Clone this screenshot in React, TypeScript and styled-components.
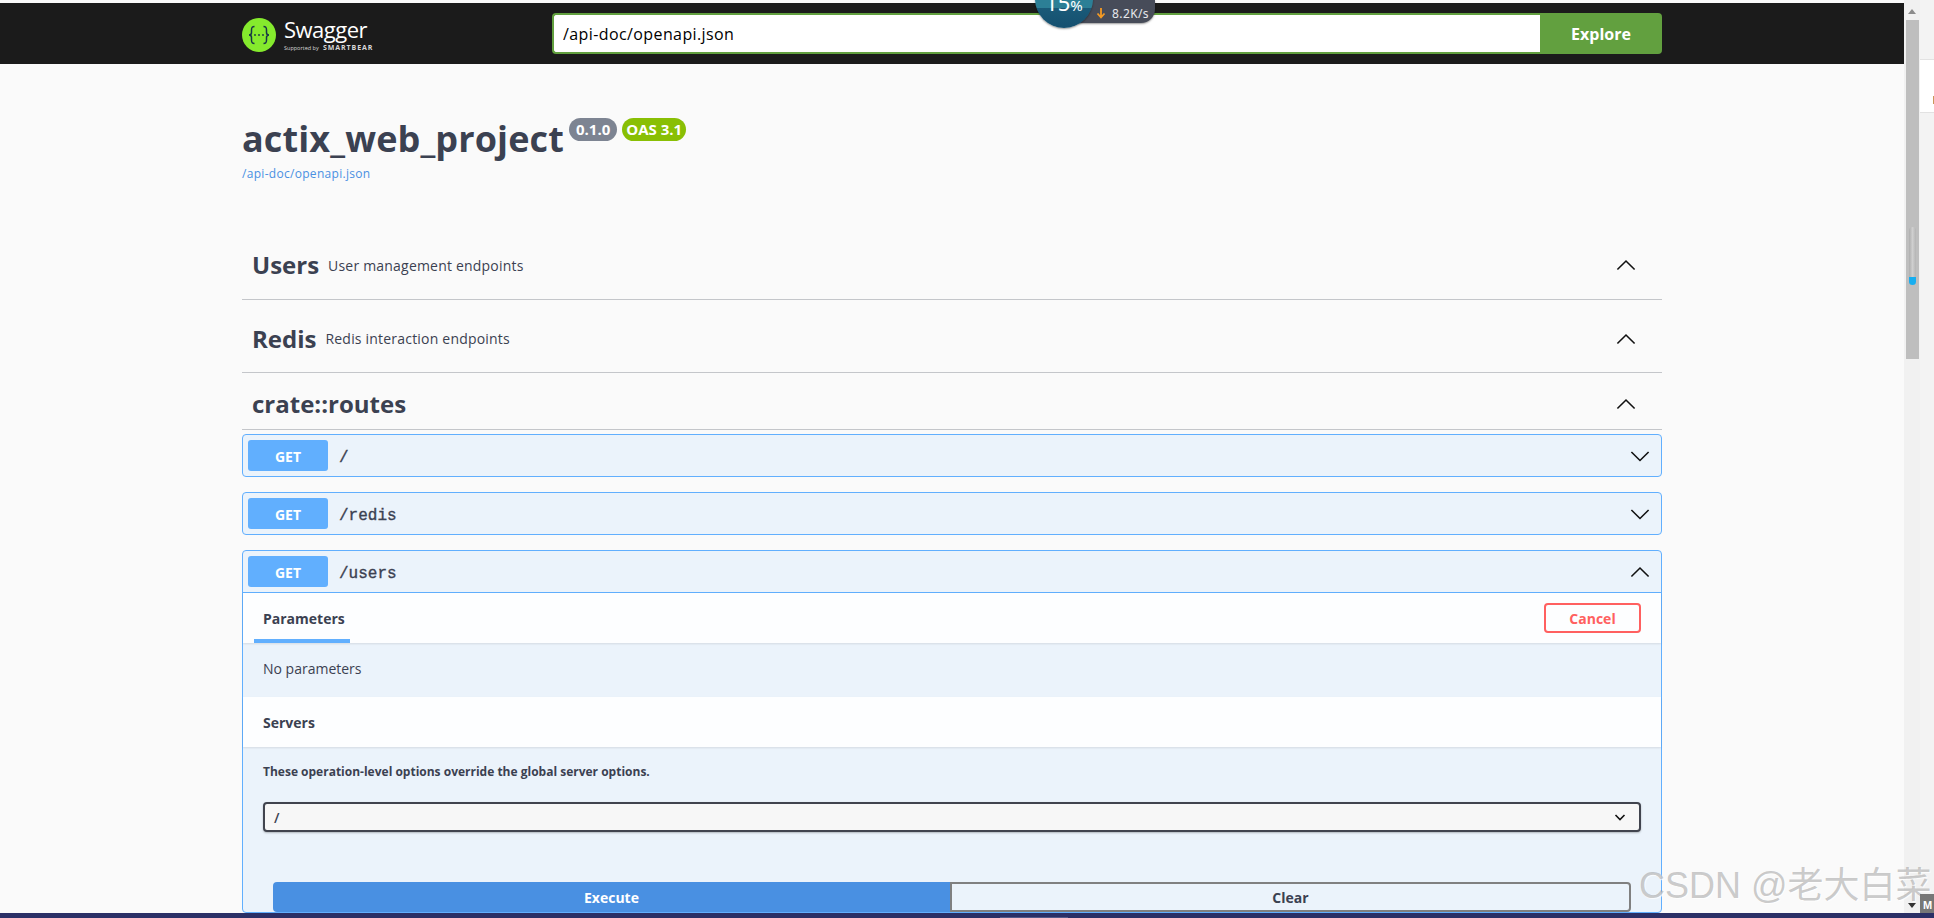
import React from 'react';
import styled, { createGlobalStyle } from 'styled-components';

const GlobalStyle = createGlobalStyle`
  html, body {
    margin: 0;
    padding: 0;
    background: #fafafa;
    overflow: hidden;
  }
  * {
    box-sizing: border-box;
  }
`;

const sans = `"Open Sans", "Noto Sans", sans-serif`;
const mono = `"Liberation Mono", monospace`;

const Screen = styled.div`
  position: relative;
  display: flex;
  width: 1934px;
  height: 918px;
  overflow: hidden;
  font-family: ${sans};
  color: #3b4151;
`;

const Page = styled.main`
  flex: 0 0 1904px;
  padding-top: 3px;
  background: #fafafa;
`;

const TopBar = styled.header`
  display: flex;
  align-items: center;
  justify-content: space-between;
  height: 61px;
  padding: 0 242px;
  background: #1b1b1b;
`;

const Brand = styled.div`
  display: flex;
  align-items: center;
  gap: 8px;
  margin-top: 2px;
`;

const BrandText = styled.div`
  display: flex;
  flex-direction: column;
  color: #fff;
`;

const BrandName = styled.span`
  font-size: 22px;
  line-height: 24px;
  font-weight: 400;
  letter-spacing: -0.5px;
`;

const BrandSub = styled.span`
  margin-top: 3px;
  font-size: 5.5px;
  line-height: 8px;
  color: #d8d8d8;
  white-space: nowrap;

  b {
    margin-left: 3px;
    font-size: 7px;
    letter-spacing: 0.9px;
    font-weight: 700;
  }
`;

const ExploreForm = styled.form`
  display: flex;
  width: 1110px;
  height: 41px;
  margin: 0;
`;

const UrlInput = styled.input`
  flex: 1;
  min-width: 0;
  padding: 0 9px;
  border: 2px solid #62a03f;
  border-right: 0;
  border-radius: 4px 0 0 4px;
  outline: none;
  background: #fff;
  color: #000;
  font-family: ${sans};
  font-size: 16px;
  letter-spacing: 0.4px;
`;

const ExploreButton = styled.button`
  width: 122px;
  border: 0;
  border-radius: 0 4px 4px 0;
  background: #62a03f;
  color: #fff;
  font-family: ${sans};
  font-size: 16px;
  font-weight: 700;
`;

const Content = styled.div`
  padding: 0 242px;
`;

const Info = styled.section`
  height: 163px;
  padding-top: 51px;
`;

const TitleRow = styled.div`
  display: flex;
  align-items: flex-start;
  gap: 5px;
`;

const Title = styled.h1`
  margin: 0;
  font-size: 36px;
  line-height: 48px;
  font-weight: 700;
  letter-spacing: 0.12px;
`;

const Badge = styled.span`
  margin-top: 3px;
  padding: 0 7px;
  height: 23px;
  border-radius: 12px;
  color: #fff;
  font-size: 15px;
  line-height: 23px;
  font-weight: 700;
`;

const VersionBadge = styled(Badge)`
  background: #7d8492;
`;

const OasBadge = styled(Badge)`
  padding: 0 4px;
  background: #89bf04;
`;

const SpecLink = styled.a`
  display: block;
  margin-top: 3px;
  color: #4990e2;
  font-size: 12px;
  line-height: 16px;
  letter-spacing: 0.3px;
`;

const TagRow = styled.div<{ $height: number }>`
  display: flex;
  align-items: center;
  height: ${(p) => p.$height}px;
  padding: 4px 26px 0 10px;
  border-bottom: 1px solid #c4c6ca;
  margin-bottom: 1px;
`;

const TagName = styled.h3`
  margin: 0;
  font-size: 24px;
  line-height: 32px;
  font-weight: 700;
`;

const TagNote = styled.span`
  flex: 1;
  margin-left: 9px;
  font-size: 14px;
  letter-spacing: 0.2px;
`;

const Spacer = styled.span`
  flex: 1;
`;

const Chevron = styled.svg`
  flex: none;
  width: 20px;
  height: 20px;
  fill: none;
  stroke: #111;
  stroke-width: 1.6;
`;

const OpList = styled.div`
  display: flex;
  flex-direction: column;
  gap: 15px;
  margin-top: 4px;
`;

const Op = styled.section`
  border: 1px solid #61affe;
  border-radius: 4px;
  background: #ebf3fb;
`;

const OpSummary = styled.div<{ $open?: boolean }>`
  display: flex;
  align-items: center;
  height: ${(p) => (p.$open ? 42 : 41)}px;
  padding: 0 11px 0 5px;
  border-bottom: ${(p) => (p.$open ? '1px solid #61affe' : '0')};
`;

const Method = styled.span`
  width: 80px;
  height: 31px;
  border-radius: 3px;
  background: #61affe;
  color: #fff;
  font-size: 14px;
  line-height: 33px;
  font-weight: 700;
  text-align: center;
`;

const OpPath = styled.span`
  flex: 1;
  margin-left: 11px;
  padding-top: 5px;
  font-family: ${mono};
  font-size: 16px;
  font-weight: 400;
  -webkit-text-stroke: 0.35px #3b4151;
`;

const SectionHead = styled.div<{ $height: number }>`
  display: flex;
  align-items: center;
  justify-content: space-between;
  height: ${(p) => p.$height}px;
  padding: 0 20px;
  background: #fdfeff;
  box-shadow: 0 1px 2px rgba(0, 0, 0, 0.1);
`;

const Tab = styled.h4`
  position: relative;
  margin: 2px 0 0;
  font-size: 14px;
  line-height: 20px;
  font-weight: 700;

  &::after {
    content: '';
    position: absolute;
    left: -9px;
    bottom: -14px;
    width: 96px;
    height: 4px;
    background: #61affe;
  }
`;

const SectionLabel = styled.h4`
  margin: 2px 0 0;
  font-size: 14px;
  line-height: 20px;
  font-weight: 700;
`;

const CancelButton = styled.button`
  width: 97px;
  height: 30px;
  border: 2px solid #ff6060;
  border-radius: 4px;
  background: transparent;
  color: #ff6060;
  font-family: ${sans};
  font-size: 14px;
  font-weight: 700;
`;

const NoParams = styled.p`
  display: flex;
  align-items: center;
  height: 54px;
  margin: 0;
  padding: 0 20px 4px;
  font-size: 14px;
`;

const ServersBody = styled.div`
  padding: 17px 20px 0;
`;

const ServerNote = styled.p`
  margin: 0;
  font-size: 12px;
  line-height: 16px;
  font-weight: 700;
`;

const ServerSelect = styled.div`
  display: flex;
  align-items: center;
  justify-content: space-between;
  height: 30px;
  margin-top: 22px;
  padding: 0 13px 0 9px;
  border: 2px solid #41444e;
  border-radius: 4px;
  background: #f7f7f7;
  box-shadow: 0 1px 2px rgba(0, 0, 0, 0.25);
  font-size: 14px;
  font-weight: 600;
`;

const SelectArrow = styled.svg`
  width: 12px;
  height: 12px;
  fill: none;
  stroke: #111;
  stroke-width: 1.6;
`;

const Actions = styled.div`
  display: flex;
  height: 30px;
  margin: 50px 10px 0;
`;

const ActionButton = styled.button<{ $primary?: boolean }>`
  flex: 1;
  border: ${(p) => (p.$primary ? '0' : '2px solid #808080')};
  border-radius: ${(p) => (p.$primary ? '4px 0 0 4px' : '0 4px 4px 0')};
  background: ${(p) => (p.$primary ? '#4990e2' : 'transparent')};
  color: ${(p) => (p.$primary ? '#fff' : '#3b4151')};
  font-family: ${sans};
  font-size: 14px;
  font-weight: 700;
`;

const ScrollTrack = styled.aside`
  display: flex;
  flex-direction: column;
  align-items: center;
  flex: 0 0 16px;
  padding: 9px 0 0;
  background: #f1f1f1;
`;

const ScrollArrow = styled.svg`
  width: 8px;
  height: 5px;
  fill: #8c8c8c;
`;

const ScrollThumb = styled.div`
  display: flex;
  justify-content: center;
  width: 13px;
  height: 339px;
  margin-top: 6px;
  padding-top: 207px;
  background: #bebebe;
`;

const ThumbHandle = styled.div`
  display: flex;
  align-items: flex-end;
  width: 7px;
  height: 58px;
  border-radius: 4px;
  overflow: hidden;
  background: linear-gradient(90deg, #adadad, #cfcfcf 50%, #b4b4b4);
`;

const ThumbLevel = styled.div`
  width: 100%;
  height: 8px;
  background: #17aef0;
`;

const SidePeek = styled.aside`
  flex: 1;
  padding-top: 59px;
  background: #f3f3f3;
`;

const PeekCard = styled.div`
  display: flex;
  justify-content: flex-end;
  align-items: flex-end;
  height: 54px;
  padding-bottom: 8px;
  background: #fff;
  border-top: 1px solid #e2e2e2;
  border-bottom: 1px solid #e2e2e2;

  &::after {
    content: '';
    width: 1px;
    height: 8px;
    background: #c9965a;
  }
`;

const TaskBar = styled.div`
  position: absolute;
  left: 0;
  right: 0;
  bottom: 0;
  height: 5px;
  background: #2b2f66;

  &::after {
    content: '';
    position: absolute;
    left: 1000px;
    bottom: 0;
    width: 68px;
    height: 1px;
    background: #55598a;
  }
`;

const Watermark = styled.div`
  position: absolute;
  left: 1639px;
  top: 864px;
  color: rgba(130, 130, 130, 0.42);
  font-family: "Liberation Sans", "Noto Sans CJK SC", sans-serif;
  font-size: 36px;
  line-height: 44px;
  white-space: nowrap;
  text-shadow: 1px 1px 1px rgba(255, 255, 255, 0.8);
`;

const ScrollDown = styled.svg`
  position: absolute;
  left: 1908px;
  top: 903px;
  width: 8px;
  height: 5px;
  fill: #333;
`;

const CornerTag = styled.div`
  position: absolute;
  right: 0;
  top: 894px;
  width: 14px;
  height: 19px;
  padding: 5px 0 0 3px;
  overflow: hidden;
  background: #777;
  color: #fff;
  font-family: "Liberation Sans", sans-serif;
  font-size: 11px;
  line-height: 12px;
  font-weight: 700;
`;

const SpeedPill = styled.div`
  position: absolute;
  left: 1070px;
  top: 0;
  display: flex;
  align-items: center;
  gap: 6px;
  width: 85px;
  height: 23px;
  padding: 3px 0 0 26px;
  border-radius: 0 0 14px 0;
  background: #474c59;
  color: #e6e8ec;
  font-family: "Noto Sans", sans-serif;
  font-size: 12px;
  letter-spacing: 0.4px;
  box-shadow: 0 1px 2px rgba(0, 0, 0, 0.4);
`;

const SpeedDial = styled.div`
  position: absolute;
  left: 1035px;
  top: -30px;
  width: 58px;
  height: 58px;
  padding-top: 21px;
  border-radius: 50%;
  background: linear-gradient(180deg, #2c7f96 0%, #2c7f96 66%, #1a5a78 66%, #155070 100%);
  color: #fff;
  font-family: "Noto Sans", sans-serif;
  font-size: 22px;
  line-height: 22px;
  text-align: center;
  box-shadow: 0 1px 2px rgba(0, 0, 0, 0.4);

  small {
    font-size: 15px;
  }
`;

const ChevronUp = () => (
  <Chevron viewBox="0 0 20 20">
    <path d="M1.4 14.5 10 6l8.6 8.5" />
  </Chevron>
);

const ChevronDown = () => (
  <Chevron viewBox="0 0 20 20">
    <path d="M1.4 6 10 14.5 18.6 6" />
  </Chevron>
);

const SwaggerLogo = () => (
  <svg width="34" height="34" viewBox="0 0 34 34">
    <circle cx="17" cy="17" r="17" fill="#85ea2d" />
    <path
      d="M12.5 8.5c-3 0-3 1.5-3 3.5v2.5c0 1.500-1 2.500-2.500 2.500 1.500 0 2.500 1 2.500 2.500v2.500c0 2 0 3.500 3 3.500M21.500 8.500c3 0 3 1.500 3 3.500v2.500c0 1.500 1 2.500 2.500 2.500-1.500 0-2.500 1-2.500 2.500v2.500c0 2 0 3.500-3 3.500"
      fill="none"
      stroke="#173647"
      strokeWidth="1.500"
    />
    <circle cx="13" cy="17" r="0.900" fill="#173647" />
    <circle cx="17" cy="17" r="0.900" fill="#173647" />
    <circle cx="21" cy="17" r="0.900" fill="#173647" />
  </svg>
);

const App = () => (
  <Screen>
    <GlobalStyle />
    <Page>
      <TopBar>
        <Brand>
          <SwaggerLogo />
          <BrandText>
            <BrandName>Swagger</BrandName>
            <BrandSub>
              Supported by <b>SMARTBEAR</b>
            </BrandSub>
          </BrandText>
        </Brand>
        <ExploreForm>
          <UrlInput readOnly value="/api-doc/openapi.json" />
          <ExploreButton type="button">Explore</ExploreButton>
        </ExploreForm>
      </TopBar>
      <Content>
        <Info>
          <TitleRow>
            <Title>actix_web_project</Title>
            <VersionBadge>0.1.0</VersionBadge>
            <OasBadge>OAS 3.1</OasBadge>
          </TitleRow>
          <SpecLink>/api-doc/openapi.json</SpecLink>
        </Info>
        <TagRow $height={73}>
          <TagName>Users</TagName>
          <TagNote>User management endpoints</TagNote>
          <ChevronUp />
        </TagRow>
        <TagRow $height={72}>
          <TagName>Redis</TagName>
          <TagNote>Redis interaction endpoints</TagNote>
          <ChevronUp />
        </TagRow>
        <TagRow $height={56}>
          <TagName>crate::routes</TagName>
          <Spacer />
          <ChevronUp />
        </TagRow>
        <OpList>
          <Op>
            <OpSummary>
              <Method>GET</Method>
              <OpPath>/</OpPath>
              <ChevronDown />
            </OpSummary>
          </Op>
          <Op>
            <OpSummary>
              <Method>GET</Method>
              <OpPath>/redis</OpPath>
              <ChevronDown />
            </OpSummary>
          </Op>
          <Op>
            <OpSummary $open>
              <Method>GET</Method>
              <OpPath>/users</OpPath>
              <ChevronUp />
            </OpSummary>
            <SectionHead $height={50}>
              <Tab>Parameters</Tab>
              <CancelButton type="button">Cancel</CancelButton>
            </SectionHead>
            <NoParams>No parameters</NoParams>
            <SectionHead $height={50}>
              <SectionLabel>Servers</SectionLabel>
            </SectionHead>
            <ServersBody>
              <ServerNote>These operation-level options override the global server options.</ServerNote>
              <ServerSelect>
                <span>/</span>
                <SelectArrow viewBox="0 0 12 12">
                  <path d="M1.500 4 6 8.500 10.500 4" />
                </SelectArrow>
              </ServerSelect>
              <Actions>
                <ActionButton type="button" $primary>
                  Execute
                </ActionButton>
                <ActionButton type="button">Clear</ActionButton>
              </Actions>
            </ServersBody>
          </Op>
        </OpList>
      </Content>
    </Page>
    <ScrollTrack>
      <ScrollArrow viewBox="0 0 8 5">
        <path d="M4 0 8 5H0z" />
      </ScrollArrow>
      <ScrollThumb>
        <ThumbHandle>
          <ThumbLevel />
        </ThumbHandle>
      </ScrollThumb>
    </ScrollTrack>
    <SidePeek>
      <PeekCard />
    </SidePeek>

    <SpeedPill>
      <svg width="10" height="12" viewBox="0 0 10 12">
        <path d="M5 1v9M1.500 6.500 5 10.500l3.500-4" fill="none" stroke="#f59a23" strokeWidth="1.800" />
      </svg>
      8.2K/s
    </SpeedPill>
    <SpeedDial>
      15<small>%</small>
    </SpeedDial>
    <Watermark>CSDN @老大白菜</Watermark>
    <ScrollDown viewBox="0 0 8 5">
      <path d="M0 0h8L4 5z" />
    </ScrollDown>
    <CornerTag>M</CornerTag>
    <TaskBar />
  </Screen>
);

export default App;
